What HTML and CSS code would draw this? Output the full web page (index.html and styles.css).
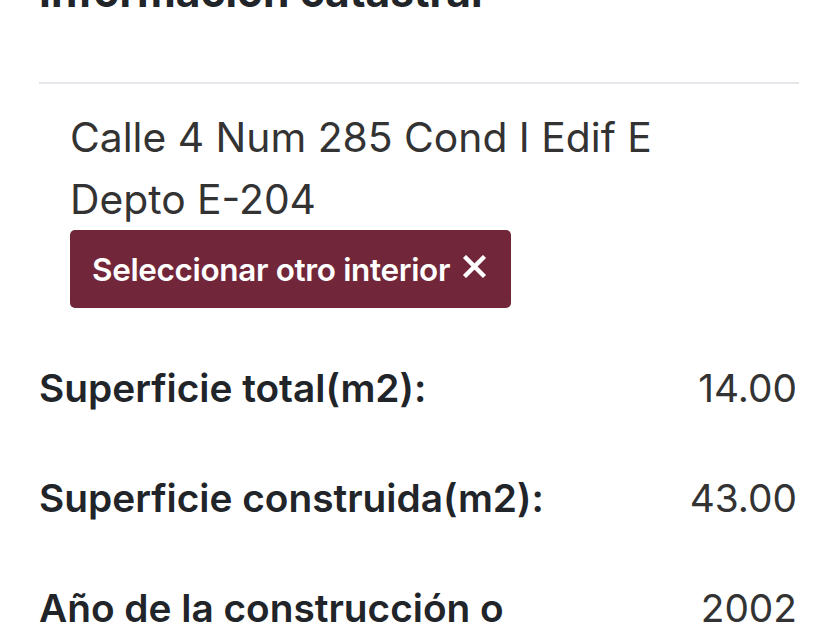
FILE: index.html
```html
<!DOCTYPE html>
<html>
	<head>
		<meta charset="utf-8">
		<title>Información catastral</title>
		<link rel="stylesheet" href="styles.css">
	</head>
	<body>
		<div class="panel">
			<h2 class="titulo">Información catastral</h2>
			<div class="divisor"></div>
			<div class="domicilio">
				<p class="direccion">Calle 4 Num 285 Cond I Edif E Depto E-204</p>
				<a class="btn-interior" href="#">
					<span>Seleccionar otro interior</span>
					<svg class="cerrar" width="25" height="23" viewBox="0 0 25 23">
						<path d="M2.5 1.5 L22.5 21.5 M22.5 1.5 L2.5 21.5" stroke="#fff" stroke-width="4.4" fill="none"/>
					</svg>
				</a>
			</div>
			<ul class="datos">
				<li class="fila">
					<span class="etiqueta">Superficie total(m2):</span>
					<span class="valor">14.00</span>
				</li>
				<li class="fila">
					<span class="etiqueta">Superficie construida(m2):</span>
					<span class="valor">43.00</span>
				</li>
				<li class="fila">
					<span class="etiqueta">Año de la construcción o</span>
					<span class="valor">2002</span>
				</li>
			</ul>
		</div>
	</body>
</html>
```

FILE: styles.css
```css
*{
	margin: 0;
	padding: 0;
	box-sizing: border-box;
}
ul{
	list-style: none;
}
a{
	text-decoration: none;
}
body{
	background-color: #fff;
	color: #212529;
	font-family: Inter, "Noto Sans", sans-serif;
	overflow: hidden;
}
.panel{
	width: 840px;
	padding: 0 41px 0 39px;
	margin-top: -42px;
}
.titulo{
	font-size: 42.5px;
	font-weight: 700;
	line-height: 68px;
}
.divisor{
	height: 2px;
	margin-top: 56px;
	background-color: #e5e7eb;
}
.domicilio{
	padding: 22px 0 0 31px;
}
.direccion{
	width: 640px;
	font-size: 40.8px;
	line-height: 62px;
	color: #333;
}
.btn-interior{
	display: inline-flex;
	align-items: center;
	gap: 12px;
	height: 78px;
	padding: 0 24px 0 22px;
	border-radius: 5px;
	background-color: #722639;
	color: #fff;
	font-size: 31.5px;
	font-weight: 600;
	letter-spacing: -0.35px;
}
.cerrar{
	display: block;
	margin-top: -6px;
}
.datos{
	margin-top: 55px;
}
.fila{
	display: flex;
	justify-content: space-between;
	align-items: baseline;
	height: 110px;
	font-size: 38.8px;
	line-height: 50px;
}
.etiqueta{
	font-weight: 600;
	color: #212529;
}
.valor{
	color: #333;
	padding-right: 2px;
}
```
